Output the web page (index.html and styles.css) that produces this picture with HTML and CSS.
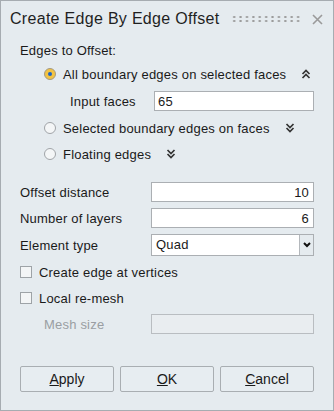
FILE: index.html
```html
<html>
<head>
<meta charset="UTF-8" />
<title>Create Edge By Edge Offset</title>
<link rel="stylesheet" href="styles.css">
</head>
<body>
<div class="dialog">
  <div class="titlebar">
    <span class="title">Create Edge By Edge Offset</span>
    <span class="gripper"></span>
    <svg class="close" width="11" height="11" viewBox="0 0 11 11">
      <path d="M1 1 L10 10 M10 1 L1 10" stroke="#9a9a9a" stroke-width="1.6" fill="none"/>
    </svg>
  </div>

  <div class="content">
    <div class="row section-label">Edges to Offset:</div>

    <div class="row option first">
      <span class="radio checked"></span>
      <span>All boundary edges on selected faces</span>
      <svg class="chevron" width="10" height="10" viewBox="0 0 10 10">
        <path d="M1.5 5 L5 1.5 L8.5 5 M1.5 9 L5 5.5 L8.5 9" stroke="#333" stroke-width="1.7" fill="none"/>
      </svg>
    </div>

    <div class="row sub-field">
      <label class="sub-label">Input faces</label>
      <input class="field sub-input" type="text" value="65">
    </div>

    <div class="row option">
      <span class="radio"></span>
      <span>Selected boundary edges on faces</span>
      <svg class="chevron" width="10" height="10" viewBox="0 0 10 10">
        <path d="M1.5 1 L5 4.5 L8.5 1 M1.5 5 L5 8.5 L8.5 5" stroke="#333" stroke-width="1.7" fill="none"/>
      </svg>
    </div>

    <div class="row option">
      <span class="radio"></span>
      <span>Floating edges</span>
      <svg class="chevron" width="10" height="10" viewBox="0 0 10 10">
        <path d="M1.5 1 L5 4.5 L8.5 1 M1.5 5 L5 8.5 L8.5 5" stroke="#333" stroke-width="1.7" fill="none"/>
      </svg>
    </div>

    <div class="row form-row offset">
      <label class="form-label">Offset distance</label>
      <input class="field num" type="text" value="10">
    </div>

    <div class="row form-row">
      <label class="form-label">Number of layers</label>
      <input class="field num" type="text" value="6">
    </div>

    <div class="row form-row select-row">
      <label class="form-label">Element type</label>
      <div class="select">
        <span class="select-value">Quad</span>
        <span class="select-btn">
          <svg width="8" height="6" viewBox="0 0 8 6">
            <path d="M1 1 L4 4 L7 1" stroke="#111" stroke-width="2" fill="none"/>
          </svg>
        </span>
      </div>
    </div>

    <div class="row check first-check">
      <span class="checkbox"></span>
      <span>Create edge at vertices</span>
    </div>

    <div class="row check">
      <span class="checkbox"></span>
      <span>Local re-mesh</span>
    </div>

    <div class="row form-row mesh">
      <label class="form-label disabled-label">Mesh size</label>
      <input class="field disabled" type="text" disabled>
    </div>

    <div class="buttons">
      <button><u>A</u>pply</button>
      <button><u>O</u>K</button>
      <button><u>C</u>ancel</button>
    </div>
  </div>
</div>
</body>
</html>
```

FILE: styles.css
```css
body {
  margin: 0;
  font-family: "Liberation Sans", Arial, sans-serif;
  font-size: 13px;
  letter-spacing: 0.2px;
  color: #1a1a1a;
  background: #e5ebef;
}

.dialog {
  width: 334px;
  height: 411px;
  box-sizing: border-box;
  border: 1px solid #a6acb1;
  background: #e5ebef;
}

/* Title bar */
.titlebar {
  display: flex;
  align-items: center;
  height: 36px;
  padding: 0 9px;
}

.title {
  font-size: 16px;
  letter-spacing: 0.3px;
  color: #1f1f1f;
}

.gripper {
  width: 70px;
  height: 8px;
  margin-left: 12px;
  background-image: radial-gradient(circle, #9a9a9a 0.9px, transparent 1.3px);
  background-size: 6.4px 4px;
}

.close {
  margin-left: auto;
  margin-right: 1px;
}

/* Content */
.content {
  padding: 0 19px;
}

.row {
  display: flex;
  align-items: center;
}

.section-label {
  height: 18px;
  margin-top: 4px;
}

.option {
  height: 18px;
  margin-top: 8px;
  margin-left: 24px;
}

.option.first {
  margin-top: 6px;
}

.radio {
  width: 12px;
  height: 12px;
  box-sizing: border-box;
  border: 1px solid #a0a4a8;
  border-radius: 50%;
  background: #f4f6f7;
  margin-right: 7px;
  display: flex;
  align-items: center;
  justify-content: center;
}

.radio.checked {
  background: #f2c343;
  border-color: #a39a84;
}

.radio.checked::after {
  content: "";
  width: 4px;
  height: 4px;
  border-radius: 50%;
  background: #1c64c8;
}

.chevron {
  margin-left: 15px;
}

.sub-field {
  height: 20px;
  margin-top: 8px;
  margin-left: 50px;
}

.sub-label {
  width: 84px;
}

.field {
  height: 20px;
  box-sizing: border-box;
  border: 1px solid #abafb3;
  background: #fff;
  font-family: inherit;
  font-size: 13px;
  letter-spacing: 0.2px;
  color: #1a1a1a;
  padding: 0 3px;
  outline: none;
}

.sub-input {
  width: 160px;
}

.form-row {
  height: 20px;
  margin-top: 6px;
}

.form-row.offset {
  margin-top: 19px;
}

.form-label {
  width: 131px;
}

.form-row .field {
  width: 163px;
}

.num {
  text-align: right;
  padding-right: 4px;
}

.select-row {
  height: 22px;
}

.select {
  width: 163px;
  height: 22px;
  box-sizing: border-box;
  border: 1px solid #abafb3;
  background: #fff;
  display: flex;
}

.select-value {
  flex: 1;
  padding-left: 4px;
  line-height: 20px;
}

.select-btn {
  width: 13px;
  border-left: 1px solid #b4b8bc;
  background: #e5ebef;
  display: flex;
  align-items: center;
  justify-content: center;
}

.check {
  height: 18px;
  margin-top: 8px;
}

.check.first-check {
  margin-top: 7px;
}

.checkbox {
  width: 12px;
  height: 12px;
  box-sizing: border-box;
  border: 1px solid #9ea3a7;
  background: #f3f5f6;
  margin-right: 7px;
}

.form-row.mesh {
  margin-top: 7px;
}

.disabled-label {
  width: 107px;
  padding-left: 24px;
  color: #9a9ea2;
}

.field.disabled {
  background: #e9edf0;
  border-color: #b9bdc1;
}

/* Buttons */
.buttons {
  display: flex;
  gap: 6px;
  margin-top: 32px;
}

.buttons button {
  width: 94px;
  height: 26px;
  border: 1px solid #a9aeb2;
  border-radius: 2px;
  background: #e7edf1;
  font-family: inherit;
  font-size: 14px;
  color: #1a1a1a;
  padding: 0;
}
```
